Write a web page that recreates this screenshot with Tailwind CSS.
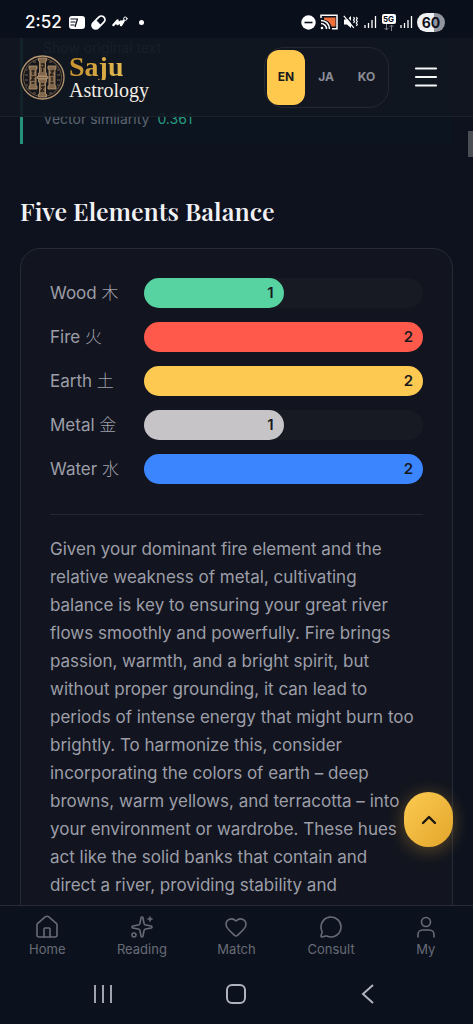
<!DOCTYPE html>
<html lang="en">
<head>
<meta charset="utf-8">
<meta name="viewport" content="width=device-width, initial-scale=1">
<title>Saju Astrology</title>
<script src="https://cdn.jsdelivr.net/npm/@tailwindcss/browser@4"></script>
</head>
<body class="bg-[#0d121e] font-['Inter','Noto_Sans_CJK_JP',sans-serif] text-[#9d9ea8]">
<div class="relative flex h-dvh flex-col overflow-hidden">

  <!-- Status bar -->
  <div class="z-20 flex h-[38px] shrink-0 items-center justify-between bg-[#0a0f1c] pt-[6px] pr-[28px] pl-[25px] text-white">
    <div class="flex items-center gap-[5px]">
      <span class="mr-[2px] text-[17px] leading-5 font-medium">2:52</span>
      <svg class="h-[13px] w-4" viewBox="0 0 16 13"><rect width="16" height="13" rx="3" fill="#fff"/><path d="M1.500 3h7.500M1.500 6h5M1.500 9h4M8.500 3l-2.500 8" stroke="#0a0f1c" stroke-width="1.200" fill="none"/></svg>
      <svg class="size-[17px]" viewBox="0 0 17 17"><g transform="rotate(-45 8.500 8.500)"><rect x="0" y="4" width="17" height="9" rx="4.500" fill="#fff"/><path d="M8.500 5.800h4a2.700 2.700 0 0 1 0 5.400h-4z" fill="#0a0f1c"/></g></svg>
      <svg class="h-3 w-4" viewBox="0 0 16 12" fill="none" stroke="#fff" stroke-linecap="round" stroke-linejoin="round"><path d="M1.500 9 5.500 4.500V8L9 5.500V9l2.500-4" stroke-width="2.500"/><circle cx="13.300" cy="2.700" r="1.700"/></svg>
      <span class="ml-[6px] size-[5px] rounded-full bg-white"></span>
    </div>
    <div class="flex items-center gap-1">
      <svg class="size-[15px]" viewBox="0 0 15 15"><circle cx="7.500" cy="7.500" r="7.200" fill="#fff"/><path d="M3.500 7.500h8" stroke="#0a0f1c" stroke-width="1.600"/></svg>
      <svg class="h-4 w-[18px]" viewBox="0 0 18 16" fill="none"><path d="M4 3.500h11.500v9h-4C10.500 9 8 6.500 4 5.500z" fill="#f0703c"/><path d="M1 4V1.200h16v13.600h-5M1 6.500c5 0 8.500 3.500 8.500 8.500M1 9.500c3 0 5.500 2.500 5.500 5.500" stroke="#fff" stroke-width="1.500"/><circle cx="2" cy="14" r="1.300" fill="#fff"/></svg>
      <svg class="ml-[1px] h-[14px] w-[15px]" viewBox="0 0 15 14" fill="none"><path d="M1 4.500h3L8 1v12L4 9.500H1z" fill="#fff"/><path d="M2 0l11 13" stroke="#0a0f1c" stroke-width="1.500"/><path d="M.8.800l10 12M10.500 2l1 1.500-1 1.500 1 1.500-1 1.500M13.300 2l1 1.500-1 1.500 1 1.500-1 1.500 1 1.500-1 1.500" stroke="#fff" stroke-width="1.200"/></svg>
      <svg class="ml-[2px] h-3 w-[13px]" viewBox="0 0 13 12" stroke="#fff" stroke-width="1.300"><path d="M1 9v3M4.500 7v5M8 4v8"/><path d="M11.500 0v12"/></svg>
      <div class="flex w-[15px] flex-col items-center">
        <span class="w-[14px] rounded-xs bg-white text-center text-[8px] leading-[10px] font-bold text-[#0a0f1c]">5G</span>
        <svg class="h-[7px] w-[10px]" viewBox="0 0 10 7" fill="none" stroke="#7d818a"><path d="M2.500 0v6M.5 4l2 2 2-2M7.500 7V1M5.500 3l2-2 2 2"/></svg>
      </div>
      <svg class="h-3 w-[13px]" viewBox="0 0 13 12" stroke="#fff" stroke-width="1.300"><path d="M1 9v3M4.500 7v5M8 4v8"/><path d="M11.500 0v12"/></svg>
      <span class="w-[28px] rounded-full bg-linear-to-r from-[#f0f1f4] from-60% to-[#92959d] to-60% text-center text-[14px] leading-[19px] font-bold text-[#10131c]">60</span>
    </div>
  </div>

  <!-- Scrolled content with the translucent header over it -->
  <div class="relative min-h-0 flex-1 overflow-hidden">
    <header class="absolute inset-x-0 top-0 z-10 flex h-[79px] items-center border-b border-[#1b202a] bg-[#11161f]/90 pr-[25px] pl-5">
      <a href="#" class="flex items-center gap-1" aria-label="Saju Astrology">
        <svg class="size-[45px]" viewBox="0 0 45 45" fill="none">
          <circle cx="22.500" cy="22.500" r="21.500" fill="#15171c" stroke="#b79672" stroke-width="1.300"/>
          <circle cx="22.500" cy="22.500" r="19" stroke="#6b5744" stroke-width="1"/>
          <path d="M6 15h2M5 20h3M5 25h3M6 30h2M37 15h2M37 20h3M37 25h3M37 30h2M13 7h3M29 7h3M13 38h3M29 38h3" stroke="#72604d"/>
          <g fill="#80664b" stroke="#b99973" stroke-width=".8">
            <path d="M9 11h8v3h-1v17h1v3H9v-3h1V14H9zM28 11h8v3h-1v17h1v3h-8v-3h1V14h-1z"/>
            <path d="M18.500 3h8v3h-1v12h1v3h-8v-3h1V6h-1zM18.500 24h8v3h-1v12h1v3h-8v-3h1V27h-1z"/>
            <path d="M17 21.500h11v2H17z"/>
          </g>
          <path d="M11.500 16h3M13 16v4M11.500 22h3l-3 3h3M11.500 28h3M30.500 16h3l-3 4h3M32 22v4M30.500 28h3M21 9h3v3h-3M22.500 13v4M21 29h3M21 32h3l-3 4h3" stroke="#221c18" stroke-width="1.300"/>
        </svg>
        <span class="flex flex-col font-['Liberation_Serif',serif]">
          <span class="bg-linear-to-r from-[#c8932f] to-[#ecc85e] bg-clip-text text-[28px] leading-[26px] font-bold text-transparent">Saju</span>
          <span class="text-[20px] leading-5 text-[#f2ede4]">Astrology</span>
        </span>
      </a>
      <div class="ml-auto flex h-[61px] items-center rounded-[20px] border border-[#242832] bg-[#121621] p-[2px] text-[12px] font-bold">
        <button class="h-[55px] w-[38px] rounded-[12px] bg-[#ffc94d] text-[#1a1a1c]">EN</button>
        <button class="h-[55px] w-[42px] text-[#8a8c95]">JA</button>
        <button class="h-[55px] w-[39px] text-[#8a8c95]">KO</button>
      </div>
      <button class="ml-[15px] flex size-11 items-center justify-center" aria-label="Menu">
        <svg class="h-6 w-6" viewBox="0 0 24 24" stroke="#f4f5f7" stroke-width="2.200" stroke-linecap="round"><path d="M2 3.500h20M2 12h20M2 20.500h20"/></svg>
      </button>
    </header>

    <main class="px-5">
      <section class="h-[106px] border-l-3 border-[#259279] bg-[#0c151f] pl-5 text-[14px] leading-5">
        <p class="text-[#4b707a]">Show original text</p>
        <p class="pt-[51px] text-[#5d6470]">Vector similarity <span class="ml-1 text-[#269b80]">0.361</span></p>
      </section>

      <h2 class="mt-[50px] font-['Playfair_Display','Liberation_Serif',serif] text-[25px] leading-[34px] font-semibold text-[#f1f1f4]">Five Elements Balance</h2>

      <section class="mt-5 rounded-[20px] border border-[#262b36] bg-[#12151f] px-[29px] pt-[29px] pb-8 text-[17px]">
        <dl class="grid grid-cols-[94px_1fr] items-center gap-y-[14px] leading-[30px]">
          <dt>Wood <span class="font-light">木</span></dt>
          <dd class="rounded-full bg-[#171a23] text-[15px] font-semibold text-[#17191e]"><div class="w-1/2 rounded-full bg-[#57d2a1] pr-[10px] text-right">1</div></dd>
          <dt>Fire <span class="font-light">火</span></dt>
          <dd class="rounded-full bg-[#171a23] text-[15px] font-semibold text-[#17191e]"><div class="rounded-full bg-[#ff594b] pr-[10px] text-right">2</div></dd>
          <dt>Earth <span class="font-light">土</span></dt>
          <dd class="rounded-full bg-[#171a23] text-[15px] font-semibold text-[#17191e]"><div class="rounded-full bg-[#fec951] pr-[10px] text-right">2</div></dd>
          <dt>Metal <span class="font-light">金</span></dt>
          <dd class="rounded-full bg-[#171a23] text-[15px] font-semibold text-[#17191e]"><div class="w-1/2 rounded-full bg-[#c7c4c8] pr-[10px] text-right">1</div></dd>
          <dt>Water <span class="font-light">水</span></dt>
          <dd class="rounded-full bg-[#171a23] text-[15px] font-semibold text-[#17191e]"><div class="rounded-full bg-[#3b86ff] pr-[10px] text-right">2</div></dd>
        </dl>
        <p class="mt-[30px] border-t border-[#242832] pt-5 pr-[6px] leading-7">Given your dominant fire element and the relative weakness of metal, cultivating balance is key to ensuring your great river flows smoothly and powerfully. Fire brings passion, warmth, and a bright spirit, but without proper grounding, it can lead to periods of intense energy that might burn too brightly. To harmonize this, consider incorporating the colors of earth – deep browns, warm yellows, and terracotta – into your environment or wardrobe. These hues act like the solid banks that contain and direct a river, providing stability and</p>
      </section>
    </main>

    <div class="absolute top-[93px] right-0 h-[26px] w-[5px] bg-[#4b4d55]"></div>
    <button class="absolute right-5 bottom-[58px] flex h-[55px] w-[49px] items-center justify-center rounded-full bg-linear-to-br from-[#fdcb50] to-[#e2a52a] shadow-[0_3px_18px_#f5b83555]" aria-label="Back to top">
      <svg class="size-5" viewBox="0 0 20 20" fill="none" stroke="#1a1710" stroke-width="2.400" stroke-linecap="round" stroke-linejoin="round"><path d="M4 13l6-6 6 6"/></svg>
    </button>
  </div>

  <!-- Tab bar -->
  <nav class="z-10 grid h-[60px] shrink-0 grid-cols-5 border-t border-[#292b34] bg-[#0c121d] pt-[9px] text-[13px] leading-4 text-[#686b76]">
    <a href="#" class="flex flex-col items-center gap-[2px]">
      <svg class="size-6 shrink-0" viewBox="0 0 24 24" fill="none" stroke="currentColor" stroke-width="1.600" stroke-linecap="round" stroke-linejoin="round"><path d="M15 22v-8a1 1 0 0 0-1-1h-4a1 1 0 0 0-1 1v8"/><path d="M2 10a2 2 0 0 1 .71-1.530l7.500-6.500a3 3 0 0 1 3.600 0l7.500 6.500A2 2 0 0 1 22 10v10a2 2 0 0 1-2 2H4a2 2 0 0 1-2-2z"/></svg>Home</a>
    <a href="#" class="flex flex-col items-center gap-[2px]">
      <svg class="size-6 shrink-0" viewBox="0 0 24 24" fill="none" stroke="currentColor" stroke-width="1.600" stroke-linecap="round" stroke-linejoin="round"><path d="M11.017 2.814a1 1 0 0 1 1.966 0l1.051 5.558a2 2 0 0 0 1.594 1.594l5.558 1.051a1 1 0 0 1 0 1.966l-5.558 1.051a2 2 0 0 0-1.594 1.594l-1.051 5.558a1 1 0 0 1-1.966 0l-1.051-5.558a2 2 0 0 0-1.594-1.594l-5.558-1.051a1 1 0 0 1 0-1.966l5.558-1.051a2 2 0 0 0 1.594-1.594z"/><path d="M20 2v4M22 4h-4"/><circle cx="4" cy="20" r="2"/></svg>Reading</a>
    <a href="#" class="flex flex-col items-center gap-[2px]">
      <svg class="size-6 shrink-0" viewBox="0 0 24 24" fill="none" stroke="currentColor" stroke-width="1.600" stroke-linecap="round" stroke-linejoin="round"><path d="M2 9.500a5.500 5.500 0 0 1 9.591-3.676.56.56 0 0 0 .818 0A5.490 5.490 0 0 1 22 9.500c0 2.290-1.500 4-3 5.500l-5.492 5.313a2 2 0 0 1-3 .019L5 15c-1.500-1.500-3-3.200-3-5.500"/></svg>Match</a>
    <a href="#" class="flex flex-col items-center gap-[2px]">
      <svg class="size-6 shrink-0" viewBox="0 0 24 24" fill="none" stroke="currentColor" stroke-width="1.600" stroke-linecap="round" stroke-linejoin="round"><path d="M2.992 16.342a2 2 0 0 1 .094 1.167l-1.065 3.290a1 1 0 0 0 1.236 1.168l3.413-.998a2 2 0 0 1 1.099.092 10 10 0 1 0-4.777-4.719"/></svg>Consult</a>
    <a href="#" class="flex flex-col items-center gap-[2px]">
      <svg class="size-6 shrink-0" viewBox="0 0 24 24" fill="none" stroke="currentColor" stroke-width="1.600" stroke-linecap="round" stroke-linejoin="round"><circle cx="12" cy="7" r="4.500"/><path d="M4 22v-2.500A4.500 4.500 0 0 1 8.500 15h7a4.500 4.500 0 0 1 4.500 4.500V22"/></svg>My</a>
  </nav>

  <!-- System navigation -->
  <div class="z-10 flex h-[59px] shrink-0 items-center justify-between bg-[#0c121d] pr-[93px] pb-[2px] pl-[91px] text-[#aeb3bf]">
    <button aria-label="Recent apps"><svg class="size-6" viewBox="0 0 24 24" stroke="currentColor" stroke-width="1.800"><path d="M4 3v18M12 3v18M20 3v18"/></svg></button>
    <button aria-label="Home screen"><svg class="size-6" viewBox="0 0 24 24" fill="none" stroke="currentColor" stroke-width="2"><rect x="3" y="3" width="18" height="18" rx="5"/></svg></button>
    <button aria-label="Back"><svg class="size-6" viewBox="0 0 24 24" fill="none" stroke="currentColor" stroke-width="2"><path d="M17 3 7 12l10 9"/></svg></button>
  </div>
</div>
</body>
</html>
